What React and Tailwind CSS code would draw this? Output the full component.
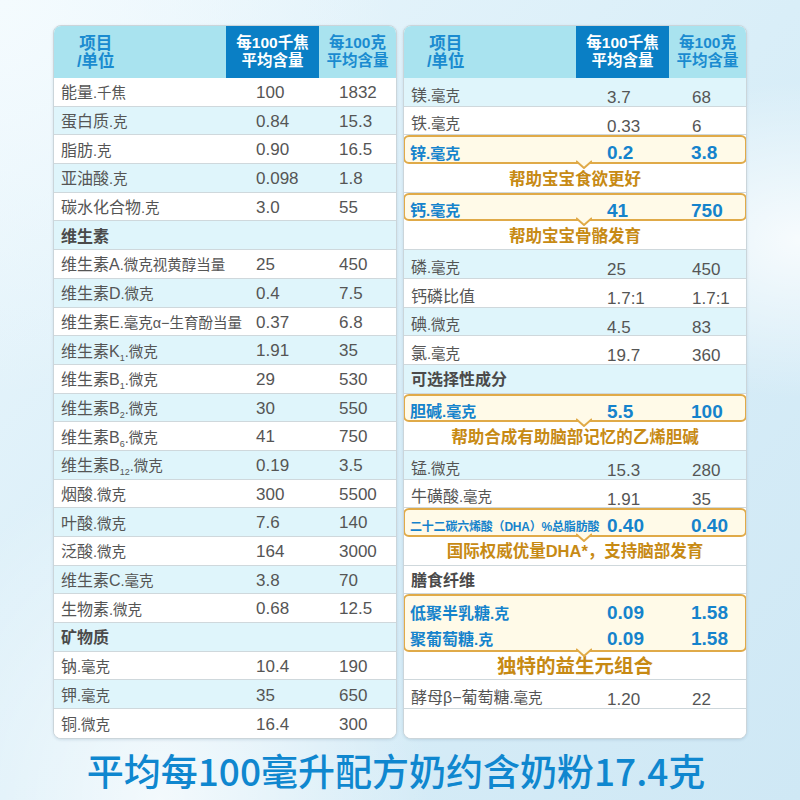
import React from "react";

const FONT = "font-['Liberation_Sans','Noto_Sans_CJK_SC',sans-serif]";

function Lbl({ m, u, s }) {
  return (
    <span className="whitespace-nowrap">
      <span className="text-[16px]">{m}</span>
      {s ? <span className="relative top-[4px] text-[9px]">{s}</span> : null}
      {u ? <span className="text-[14.5px]">{u}</span> : null}
    </span>
  );
}

function Row({ label, a, b, cyan, last, right, section }) {
  const bg = cyan ? "bg-[#dff5fb]" : "bg-white";
  const line = last ? "" : "border-b border-[#cfd8dc]";
  return (
    <div className={`grid grid-cols-[172px_93px_1fr] h-[28.7px] ${bg} ${line}`}>
      <div
        className={`pl-[7px] flex items-center pt-[3px] ${
          section ? "font-bold text-[#4a4a4a] text-[16px]" : "text-[#555]"
        }`}
      >
        {label}
      </div>
      <div className={`flex items-center text-[17px] text-[#555] ${right ? "pl-[31px] pt-[7px]" : "pl-[30px] pt-[2px]"}`}>{a}</div>
      <div className={`flex items-center text-[17px] text-[#555] ${right ? "pl-[23px] pt-[7px]" : "pl-[20px] pt-[2px]"}`}>{b}</div>
    </div>
  );
}

function Notch() {
  return (
    <svg
      className="absolute left-[171px] top-[calc(100%-2px)]"
      width="16"
      height="9"
      viewBox="0 0 16 9"
    >
      <polygon points="0,0 16,0 8,8" fill="#fffae8" />
      <path d="M0 1 L8 8 L16 1" fill="none" stroke="#e0aa48" strokeWidth="2" />
    </svg>
  );
}

function HL({ rows, tall, small }) {
  return (
    <div
      className={`relative border-2 border-[#e0aa48] rounded-[6px] bg-[#fffae8] -mx-[1px] ${
        tall ? "h-[57.4px] pt-[1px]" : "h-[28.7px]"
      }`}
    >
      {rows.map((r, i) => (
        <div key={i} className={`grid grid-cols-[171px_92px_1fr] ${tall ? "h-[26px]" : "h-[24.7px]"}`}>
          <div
            className={`pl-[5px] flex items-center pt-[2px] font-bold text-[#1583cc] whitespace-nowrap ${
              small ? "text-[12px] tracking-[-0.2px]" : ""
            }`}
          >
            {r.label}
          </div>
          <div className="flex items-center pl-[31px] pt-[2px] text-[19px] font-bold text-[#1583cc]">{r.a}</div>
          <div className="flex items-center pl-[23px] pt-[2px] text-[19px] font-bold text-[#1583cc]">{r.b}</div>
        </div>
      ))}
      <Notch />
    </div>
  );
}

function Cap({ children, big }) {
  return (
    <div
      className={`h-[28.7px] flex items-center justify-center pt-[2px] border-b border-[#cfd8dc] bg-white font-bold text-[#c78a14] ${
        big ? "text-[19.5px]" : "text-[16.5px]"
      }`}
    >
      {children}
    </div>
  );
}

function Header() {
  return (
    <div className="grid grid-cols-[172px_93px_1fr] h-[52px] bg-[#a9e3ef] font-bold leading-[18px]">
      <div className="pl-[23px] flex items-center">
        <div className="flex flex-col items-center text-[#1a8bd0] text-[16.5px]">
          <span>项目</span>
          <span>/单位</span>
        </div>
      </div>
      <div className="bg-[#0a7fc5] text-white flex flex-col items-center justify-center text-[15.5px]">
        <span>每100千焦</span>
        <span>平均含量</span>
      </div>
      <div className="text-[#1a8bd0] flex flex-col items-center justify-center text-[15.5px]">
        <span>每100克</span>
        <span>平均含量</span>
      </div>
    </div>
  );
}

const leftRows = [
  { label: <Lbl m="能量" u=".千焦" />, a: "100", b: "1832" },
  { label: <Lbl m="蛋白质" u=".克" />, a: "0.84", b: "15.3" },
  { label: <Lbl m="脂肪" u=".克" />, a: "0.90", b: "16.5" },
  { label: <Lbl m="亚油酸" u=".克" />, a: "0.098", b: "1.8" },
  { label: <Lbl m="碳水化合物" u=".克" />, a: "3.0", b: "55" },
  { label: "维生素", section: true },
  { label: <Lbl m="维生素A" u=".微克视黄醇当量" />, a: "25", b: "450" },
  { label: <Lbl m="维生素D" u=".微克" />, a: "0.4", b: "7.5" },
  { label: <Lbl m="维生素E" u=".毫克α−生育酚当量" />, a: "0.37", b: "6.8" },
  { label: <Lbl m="维生素K" s="1" u=".微克" />, a: "1.91", b: "35" },
  { label: <Lbl m="维生素B" s="1" u=".微克" />, a: "29", b: "530" },
  { label: <Lbl m="维生素B" s="2" u=".微克" />, a: "30", b: "550" },
  { label: <Lbl m="维生素B" s="6" u=".微克" />, a: "41", b: "750" },
  { label: <Lbl m="维生素B" s="12" u=".微克" />, a: "0.19", b: "3.5" },
  { label: <Lbl m="烟酸" u=".微克" />, a: "300", b: "5500" },
  { label: <Lbl m="叶酸" u=".微克" />, a: "7.6", b: "140" },
  { label: <Lbl m="泛酸" u=".微克" />, a: "164", b: "3000" },
  { label: <Lbl m="维生素C" u=".毫克" />, a: "3.8", b: "70" },
  { label: <Lbl m="生物素" u=".微克" />, a: "0.68", b: "12.5" },
  { label: "矿物质", section: true },
  { label: <Lbl m="钠" u=".毫克" />, a: "10.4", b: "190" },
  { label: <Lbl m="钾" u=".毫克" />, a: "35", b: "650" },
  { label: <Lbl m="铜" u=".微克" />, a: "16.4", b: "300" },
];

const B = ({ m, u }) => (
  <span>
    <span className="text-[16px]">{m}</span>
    <span className="text-[15px]">{u}</span>
  </span>
);

export default function App() {
  return (
    <div
      className={`${FONT} w-[800px] h-[800px] overflow-hidden bg-[radial-gradient(circle_at_0%_0%,#f4fbfe_0%,rgba(244,251,254,0)_35%),radial-gradient(ellipse_at_100%_30%,rgba(255,255,255,0.8)_0%,rgba(255,255,255,0)_20%),radial-gradient(ellipse_at_20%_100%,rgba(255,255,255,0.7)_0%,rgba(255,255,255,0)_30%),linear-gradient(135deg,#eaf6fc_0%,#d9eef8_50%,#cfe8f5_100%)]`}
    >
      <div className="flex gap-[6px] pt-[25px] pl-[53px]">
        {/* Left panel */}
        <div className="w-[344px] h-[714px] border border-[#cbd5da] rounded-[8px] overflow-hidden bg-white shadow-[0_1px_3px_rgba(0,60,100,0.12)]">
          <Header />
          {leftRows.map((r, i) => (
            <Row
              key={i}
              label={r.label}
              a={r.a}
              b={r.b}
              section={r.section}
              cyan={i % 2 === 1}
              last={i === leftRows.length - 1}
            />
          ))}
        </div>

        {/* Right panel */}
        <div className="w-[344px] h-[714px] border border-[#cbd5da] rounded-[8px] overflow-hidden bg-white shadow-[0_1px_3px_rgba(0,60,100,0.12)]">
          <Header />
          <Row right cyan label={<Lbl m="镁" u=".毫克" />} a="3.7" b="68" />
          <Row right label={<Lbl m="铁" u=".毫克" />} a="0.33" b="6" />
          <HL rows={[{ label: <B m="锌" u=".毫克" />, a: "0.2", b: "3.8" }]} />
          <Cap>帮助宝宝食欲更好</Cap>
          <HL rows={[{ label: <B m="钙" u=".毫克" />, a: "41", b: "750" }]} />
          <Cap>帮助宝宝骨骼发育</Cap>
          <Row right cyan label={<Lbl m="磷" u=".毫克" />} a="25" b="450" />
          <Row right label={<Lbl m="钙磷比值" />} a="1.7:1" b="1.7:1" />
          <Row right cyan label={<Lbl m="碘" u=".微克" />} a="4.5" b="83" />
          <Row right label={<Lbl m="氯" u=".毫克" />} a="19.7" b="360" />
          <Row right cyan section label="可选择性成分" />
          <HL rows={[{ label: <B m="胆碱" u=".毫克" />, a: "5.5", b: "100" }]} />
          <Cap>帮助合成有助脑部记忆的乙烯胆碱</Cap>
          <Row right cyan label={<Lbl m="锰" u=".微克" />} a="15.3" b="280" />
          <Row right label={<Lbl m="牛磺酸" u=".毫克" />} a="1.91" b="35" />
          <HL small rows={[{ label: "二十二碳六烯酸（DHA）%总脂肪酸", a: "0.40", b: "0.40" }]} />
          <Cap>国际权威优量DHA*，支持脑部发育</Cap>
          <Row right section label="膳食纤维" />
          <HL
            tall
            rows={[
              { label: <B m="低聚半乳糖" u=".克" />, a: "0.09", b: "1.58" },
              { label: <B m="聚葡萄糖" u=".克" />, a: "0.09", b: "1.58" },
            ]}
          />
          <Cap big>独特的益生元组合</Cap>
          <Row right label={<Lbl m="酵母β−葡萄糖" u=".毫克" />} a="1.20" b="22" />
          <Row right last label="" a="" b="" />
        </div>
      </div>

      <div className="mt-[9px] text-center font-['Noto_Sans_CJK_SC',sans-serif] font-medium text-[37px] leading-[44px] text-[#0f87cf] pr-[8px]">
        平均每100毫升配方奶约含奶粉17.4克
      </div>
    </div>
  );
}
